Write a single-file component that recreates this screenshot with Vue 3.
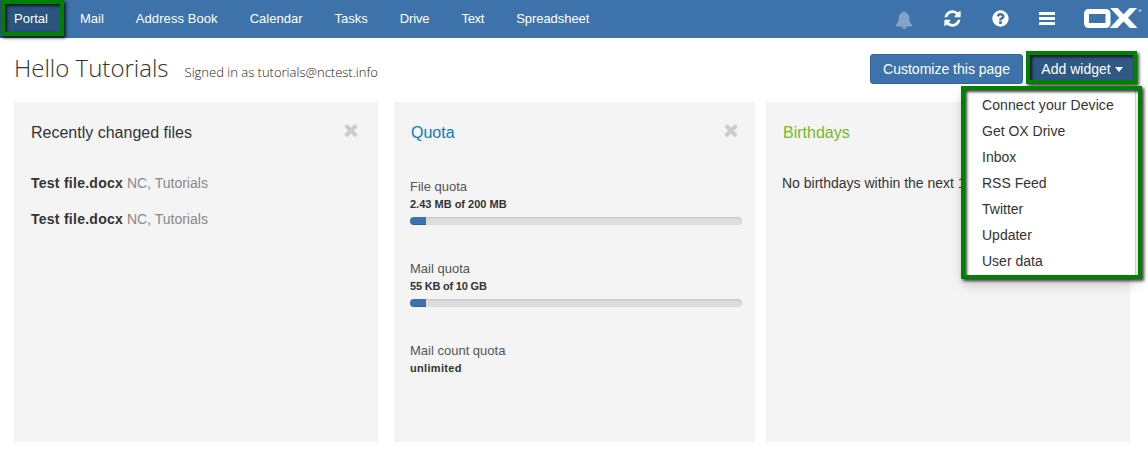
<template>
  <div class="portal">
    <header class="topbar">
      <nav class="nav">
        <a v-for="app in apps" :key="app" :class="['nav-item', { active: app === current }]" @click="current = app">
          {{ app }}
        </a>
      </nav>
      <div class="tools">
        <svg class="tool bell" viewBox="0 0 1792 1792"><path d="M912 1696q0-16-16-16-59 0-101.5-42.5t-42.5-101.5q0-16-16-16t-16 16q0 73 51.5 124.5t124.5 51.5q16 0 16-16zm816-288q0 52-38 90t-90 38h-448q0 106-75 181t-181 75-181-75-75-181h-448q-52 0-90-38t-38-90q50-42 91-88t85-119.500 74.500-158.500 50-206 19.500-260q0-152 117-282.500t307-158.500q-8-19-8-39 0-40 28-68t68-28 68 28 28 68q0 20-8 39 190 28 307 158.500t117 282.500q0 139 19.500 260t50 206 74.500 158.500 85 119.500 91 88z" /></svg>
        <svg class="tool refresh" viewBox="0 0 1792 1792"><path d="M1639 1056q0 5-1 7-64 268-268 434.500t-478 166.500q-146 0-282.500-55t-243.500-157l-129 129q-19 19-45 19t-45-19-19-45v-448q0-26 19-45t45-19h448q26 0 45 19t19 45-19 45l-137 137q71 66 161 102t187 36q134 0 250-65t186-179q11-17 53-117 8-23 30-23h192q13 0 22.500 9.500t9.500 22.500zm25-800v448q0 26-19 45t-45 19h-448q-26 0-45-19t-19-45 19-45l138-138q-148-137-349-137-134 0-250 65t-186 179q-11 17-53 117-8 23-30 23h-199q-13 0-22.500-9.500t-9.500-22.500v-7q65-268 270-434.500t480-166.500q146 0 284 55.500t245 156.500l130-129q19-19 45-19t45 19 19 45z" /></svg>
        <svg class="tool help" viewBox="0 0 1792 1792"><path d="M1024 1376v-192q0-14-9-23t-23-9h-192q-14 0-23 9t-9 23v192q0 14 9 23t23 9h192q14 0 23-9t9-23zm256-672q0-88-55.500-163t-138.500-116-170-41q-243 0-371 213-15 24 8 42l132 100q7 6 19 6 16 0 25-12 53-68 86-92 34-24 86-24 48 0 85.500 26t37.500 59q0 38-20 61t-68 45q-63 28-115.500 86.500t-52.500 125.500v36q0 14 9 23t23 9h192q14 0 23-9t9-23q0-19 21.500-49.500t54.500-49.500q32-18 49-28.500t46-35 44.500-48 28-60.500 12.500-81zm384 192q0 209-103 385.500t-279.500 279.500-385.500 103-385.500-103-279.500-279.500-103-385.500 103-385.500 279.500-279.500 385.500-103 385.500 103 279.500 279.500 103 385.500z" /></svg>
        <svg class="tool bars" viewBox="0 0 16 14"><rect width="16" height="3" /><rect y="5" width="16" height="3" /><rect y="10" width="16" height="3" /></svg>
        <svg class="logo" viewBox="0 0 58 22">
          <rect x="2.500" y="3.500" width="21.500" height="14" rx="2" />
          <text x="25" y="20" textLength="29" lengthAdjust="spacingAndGlyphs">X</text>
          <circle cx="56" cy="2.500" r="1.500" />
        </svg>
      </div>
    </header>

    <div class="heading">
      <h1>Hello Tutorials</h1>
      <span class="signed">Signed in as tutorials@nctest.info</span>
      <div class="actions">
        <button class="btn customize">Customize this page</button>
        <div class="dropdown">
          <button class="btn add" @click="open = !open">Add widget<i class="caret"></i></button>
          <ul v-if="open" class="menu">
            <li v-for="w in widgetTypes" :key="w">{{ w }}</li>
          </ul>
        </div>
      </div>
    </div>

    <main class="widgets">
      <section class="widget">
        <div class="widget-head">
          <h2>Recently changed files</h2>
          <svg class="close" viewBox="302 238 1188 1316"><path :d="closePath" /></svg>
        </div>
        <p v-for="(f, i) in files" :key="i" class="file"><b>{{ f.name }}</b> <span>{{ f.owner }}</span></p>
      </section>

      <section class="widget quota">
        <div class="widget-head">
          <h2>Quota</h2>
          <svg class="close" viewBox="302 238 1188 1316"><path :d="closePath" /></svg>
        </div>
        <div v-for="q in quotas" :key="q.label" class="quota-row">
          <div class="quota-label">{{ q.label }}</div>
          <div class="quota-value">{{ q.value }}</div>
          <div v-if="q.percent" class="progress">
            <div class="bar" :style="{ width: q.percent + '%' }"></div>
          </div>
        </div>
      </section>

      <section class="widget birthdays">
        <div class="widget-head">
          <h2>Birthdays</h2>
        </div>
        <p class="empty">No birthdays within the next 12 weeks</p>
      </section>
    </main>
  </div>
</template>

<script setup>
import { ref } from 'vue'

const apps = ['Portal', 'Mail', 'Address Book', 'Calendar', 'Tasks', 'Drive', 'Text', 'Spreadsheet']
const current = ref('Portal')
const open = ref(true)

const widgetTypes = ['Connect your Device', 'Get OX Drive', 'Inbox', 'RSS Feed', 'Twitter', 'Updater', 'User data']

const files = [
  { name: 'Test file.docx', owner: 'NC, Tutorials' },
  { name: 'Test file.docx', owner: 'NC, Tutorials' },
]

const quotas = [
  { label: 'File quota', value: '2.43 MB of 200 MB', percent: 4.8 },
  { label: 'Mail quota', value: '55 KB of 10 GB', percent: 4.8 },
  { label: 'Mail count quota', value: 'unlimited' },
]

const closePath = 'M1490 1322q0 40-28 68l-136 136q-28 28-68 28t-68-28l-294-294-294 294q-28 28-68 28t-68-28l-136-136q-28-28-28-68t28-68l294-294-294-294q-28-28-28-68t28-68l136-136q28-28 68-28t68 28l294 294 294-294q28-28 68-28t68 28l136 136q28 28 28 68t-28 68l-294 294 294 294q28 28 28 68z'
</script>

<style>
body { margin: 0; background: #fff; }
</style>

<style scoped>
.portal {
  height: 455px; overflow: hidden; box-sizing: border-box;
  font-family: "Liberation Sans", Arial, sans-serif; font-size: 14px; color: #333;
}
.topbar {
  display: flex; justify-content: space-between;
  height: 38px; background: #3d73aa;
}
.nav { display: flex; margin-left: -2px; }
.nav-item {
  position: relative; padding: 0 16px;
  font-size: 13px; line-height: 37px; color: #fff; cursor: pointer; white-space: nowrap;
}
.nav-item:nth-child(3) { letter-spacing: .08px; }
.nav-item:nth-child(n+6) { letter-spacing: -.12px; }
.nav-item:nth-child(7) { letter-spacing: -.3px; }
.nav-item:nth-child(8) { letter-spacing: -.05px; }
.nav-item.active { background: #2b547e; }
/* green highlight frame */
.nav-item.active::after,
.add::after,
.menu::after {
  content: ""; position: absolute; box-sizing: border-box;
  border: 4px solid #008000; pointer-events: none;
  box-shadow: 2px 2px 3px rgba(0, 0, 0, .75), inset 2px 2px 3px rgba(0, 0, 0, .75);
}
.nav-item.active::after { left: 3px; top: 0; width: 63px; height: 36px; }
.tools { display: flex; align-items: flex-start; padding-right: 6px; }
.tool { fill: #fff; }
.bell { width: 18px; height: 18px; margin: 11px 30px 0 0; opacity: .35; }
.refresh { width: 19px; height: 19px; margin: 9px 29px 0 0; }
.help { width: 19px; height: 19px; margin: 9px 29px 0 0; }
.bars { width: 16px; height: 14px; margin: 12px 29px 0 0; }
.logo { width: 58px; height: 22px; margin-top: 8px; fill: #fff; overflow: visible; }
.logo rect { fill: none; stroke: #fff; stroke-width: 5; }
.logo text { font: bold 26px "DejaVu Sans", sans-serif; }
.logo circle { opacity: .5; }

.heading {
  display: flex; align-items: flex-start; height: 64px; padding-left: 14px;
}
.heading h1 {
  margin: 12px 0 0; font: 300 24px/36px "Open Sans", sans-serif; color: #333;
}
.signed {
  margin: 25px 0 0 16px; font: 300 13px/18px "Open Sans", sans-serif; color: #222;
}
.actions { display: flex; margin: 16px 13px 0 auto; }
.btn {
  height: 30px; padding: 0; border: 1px solid #366697; border-radius: 3px;
  background: #3d73aa; color: #fff; font: 14px/28px "Liberation Sans", Arial, sans-serif;
}
.customize { width: 153px; margin-right: 5px; }
.dropdown { position: relative; }
.add { position: relative; width: 107px; background: #2f5884; border-color: #2f5884; }
.add::after { left: -3px; top: -4px; width: 111px; height: 33px; }
.caret {
  display: inline-block; margin: 0 -1px 0 4px; vertical-align: 2px;
  border: 4.5px solid transparent; border-top: 5px solid #fff; border-bottom: 0;
}
.menu {
  position: absolute; left: -65px; top: 33px; z-index: 2; box-sizing: border-box;
  width: 173px; height: 191px; margin: 0; padding: 5px 0 0 19px; list-style: none;
  background: #fff; border-right: 1px solid #ccc;
  box-shadow: 0 6px 12px rgba(0, 0, 0, .18);
}
.menu::after { left: -2px; top: -1px; width: 181px; height: 193px; }
.menu li { font-size: 14px; line-height: 26px; white-space: nowrap; }
.menu li:first-child { letter-spacing: .1px; }

.widgets { display: flex; padding-left: 14px; }
.widget {
  box-sizing: border-box; width: 364px; height: 340px; padding: 17px 20px 0 17px;
  background: #f4f4f4;
}
.widget-head { display: flex; justify-content: space-between; height: 55px; }
.widget-head h2 { margin: 4px 0 0; font-size: 16px; line-height: 20px; font-weight: 400; }
.close { width: 14px; height: 14px; margin-top: 4px; fill: #ccc; }
.file { margin: 0; height: 36px; line-height: 18px; }
.file b { letter-spacing: .26px; }
.file span { color: #888; }
.quota { width: 361px; margin: 0 11px 0 16px; padding: 17px 13px 0 16px; }
.quota .widget-head { padding: 0 4px 0 1px; }
.quota h2 { color: #0b7eba; }
.quota-row { height: 82px; padding-top: 4px; box-sizing: border-box; }
.quota-label { font-size: 13px; line-height: 18px; color: #555; }
.quota-value { font-size: 11px; line-height: 17px; font-weight: 700; }
.quota-row:nth-child(3) .quota-value { letter-spacing: -.2px; }
.quota-row:nth-child(4) .quota-value { letter-spacing: .33px; }
.progress {
  height: 8px; margin-top: 4px; border-radius: 4px; overflow: hidden;
  background: #ddd; box-shadow: inset 0 1px 2px rgba(0, 0, 0, .12);
}
.bar { height: 100%; background: #3d73aa; box-shadow: inset 0 -1px 0 rgba(0, 0, 0, .15); }
.birthdays { padding-left: 16px; }
.birthdays h2 { margin-left: 1px; color: #76b82a; }
.empty { margin: 0; line-height: 18px; white-space: nowrap; }
</style>
